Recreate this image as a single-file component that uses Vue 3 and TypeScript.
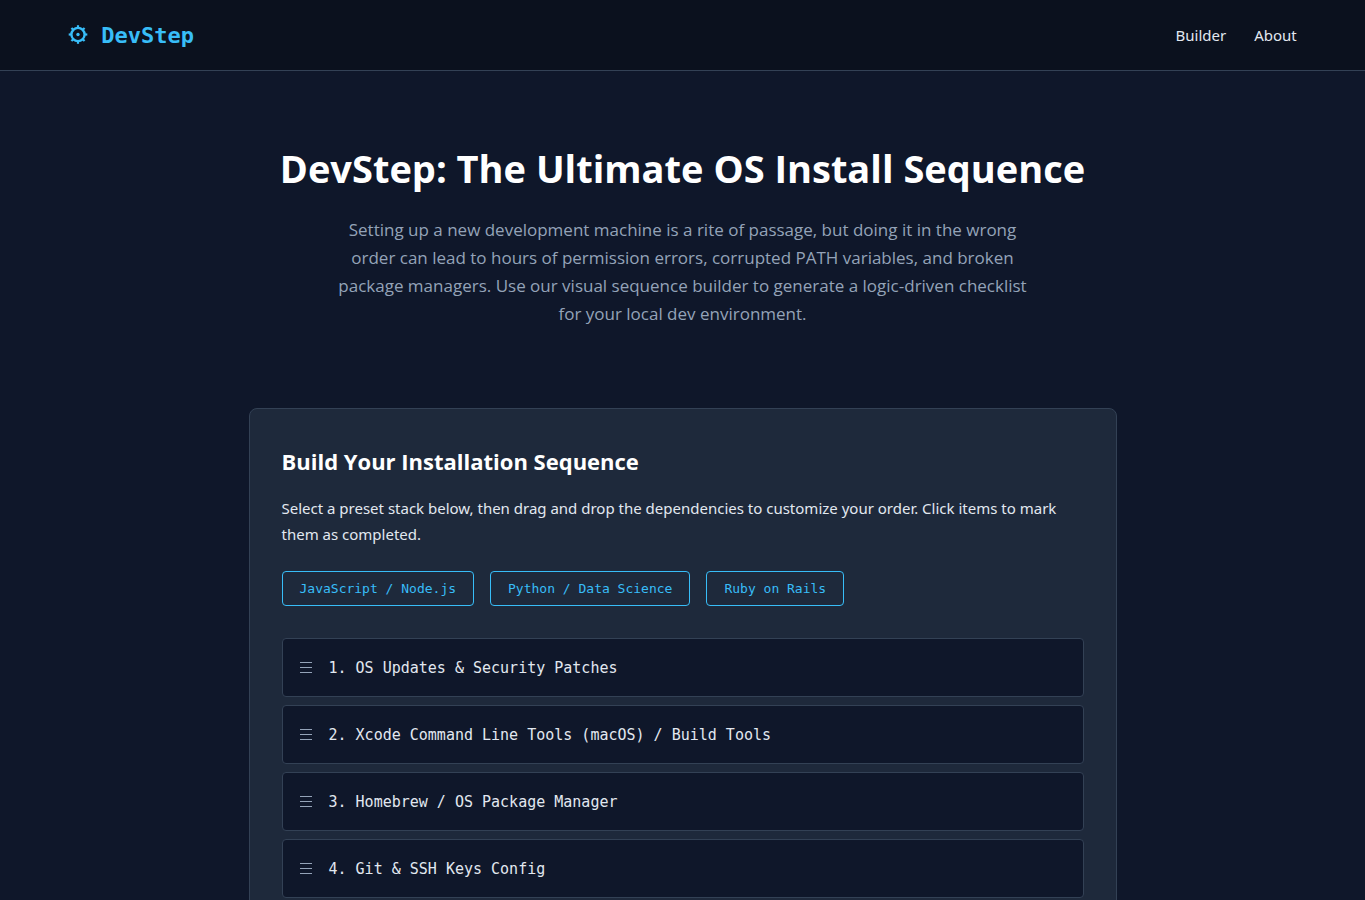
<script setup lang="ts">
import { ref } from 'vue'

interface Step {
  label: string
  done: boolean
}

const presets: Record<string, string[]> = {
  'JavaScript / Node.js': [
    'OS Updates & Security Patches',
    'Xcode Command Line Tools (macOS) / Build Tools',
    'Homebrew / OS Package Manager',
    'Git & SSH Keys Config',
  ],
  'Python / Data Science': [
    'OS Updates & Security Patches',
    'Homebrew / OS Package Manager',
    'Git & SSH Keys Config',
    'Python',
  ],
  'Ruby on Rails': [
    'OS Updates & Security Patches',
    'Homebrew / OS Package Manager',
    'Git & SSH Keys Config',
    'Ruby',
  ],
}

const steps = ref<Step[]>([])
const dragged = ref<number | null>(null)

function load(name: string): void {
  steps.value = presets[name].map((label) => ({ label, done: false }))
}

function drop(target: number): void {
  if (dragged.value === null) return
  const [moved] = steps.value.splice(dragged.value, 1)
  steps.value.splice(target, 0, moved)
  dragged.value = null
}

load('JavaScript / Node.js')
</script>

<template>
  <div class="page">
    <header class="topbar">
      <a class="brand" href="#">
        <svg class="gear" viewBox="0 0 20 20" aria-hidden="true">
          <circle cx="10" cy="9.5" r="6.6" fill="none" stroke="currentColor" stroke-width="2.4" />
          <circle cx="10" cy="9.5" r="1.7" fill="currentColor" />
          <g stroke="currentColor" stroke-width="2.2">
            <path
              v-for="n in 8"
              :key="n"
              d="M10 3.2V.2"
              :transform="`rotate(${n * 45} 10 9.5)`"
            />
          </g>
        </svg>
        <span>DevStep</span>
      </a>
      <nav class="links">
        <a href="#builder">Builder</a>
        <a href="#about">About</a>
      </nav>
    </header>

    <main class="main">
      <section class="hero">
        <h1>DevStep: The Ultimate OS Install Sequence</h1>
        <p>
          Setting up a new development machine is a rite of passage, but doing it in the wrong
          order can lead to hours of permission errors, corrupted PATH variables, and broken
          package managers. Use our visual sequence builder to generate a logic-driven checklist
          for your local dev environment.
        </p>
      </section>

      <section id="builder" class="card">
        <h2>Build Your Installation Sequence</h2>
        <p>
          Select a preset stack below, then drag and drop the dependencies to customize your order.
          Click items to mark them as completed.
        </p>
        <div class="presets">
          <button v-for="(_, name) in presets" :key="name" type="button" @click="load(name)">
            {{ name }}
          </button>
        </div>
        <ol class="steps">
          <li
            v-for="(step, i) in steps"
            :key="step.label"
            draggable="true"
            @dragstart="dragged = i"
            @dragover.prevent
            @drop="drop(i)"
          >
            <button type="button" :class="{ done: step.done }" @click="step.done = !step.done">
              <svg class="grip" viewBox="0 0 14 14" aria-hidden="true">
                <path d="M1 2.5H13M1 7.5H13M1 12.5H13" stroke="currentColor" />
              </svg>
              <span>{{ i + 1 }}. {{ step.label }}</span>
            </button>
          </li>
        </ol>
      </section>
    </main>
  </div>
</template>

<style>
body {
  background: #0f172a;
}
</style>

<style scoped>
.page {
  height: 100vh;
  overflow-y: auto;
  scrollbar-width: none;
  background: #0f172a;
  color: #e2e8f0;
  font: 15px/26px "Segoe UI", "Noto Sans", sans-serif;
}

.topbar {
  display: flex;
  justify-content: space-between;
  align-items: center;
  height: 70px;
  padding: 0 5%;
  background: #0b111e;
  border-bottom: 1px solid #334155;
}

.brand {
  display: flex;
  align-items: center;
  gap: 13px;
  color: #38bdf8;
  font: bold 22px/28px Consolas, "DejaVu Sans Mono", monospace;
  text-decoration: none;
}

.brand span {
  padding-top: 2px;
}

.gear {
  width: 20px;
  height: 20px;
}

.links {
  display: flex;
  gap: 28px;
}

.links a {
  color: #e2e8f0;
  text-decoration: none;
}

.main {
  box-sizing: border-box;
  max-width: 900px;
  margin: 0 auto;
  padding: 65px 16px;
}

.hero {
  margin-bottom: 64px;
  text-align: center;
}

h1,
h2,
.hero p {
  font-family: "Segoe UI", "Open Sans", sans-serif;
}

h1 {
  margin: 0 0 16px;
  color: #fff;
  font-size: 38px;
  line-height: 64px;
}

.hero p {
  max-width: 700px;
  margin: 0 auto;
  padding-bottom: 16px;
  color: #94a3b8;
  font-size: 17px;
  line-height: 28px;
}

.card {
  padding: 32px;
  background: #1e293b;
  border: 1px solid #334155;
  border-radius: 8px;
}

h2 {
  margin: 0 0 14px;
  color: #fff;
  font-size: 22px;
  line-height: 40px;
}

.card p {
  margin: 0 0 24px;
}

.presets {
  display: flex;
  flex-wrap: wrap;
  gap: 16px;
  margin-bottom: 32px;
}

.presets button {
  padding: 8px 17px;
  background: transparent;
  border: 1px solid #38bdf8;
  border-radius: 4px;
  color: #38bdf8;
  font: 13px/17px Consolas, "DejaVu Sans Mono", monospace;
  cursor: pointer;
}

.steps {
  display: grid;
  gap: 8px;
  margin: 0;
  padding: 0;
  list-style: none;
}

.steps button {
  display: flex;
  align-items: center;
  gap: 16px;
  width: 100%;
  padding: 17px 16px 15px;
  background: #0f172a;
  border: 1px solid #334155;
  border-radius: 4px;
  color: #e2e8f0;
  font: 15px/25px Consolas, "DejaVu Sans Mono", monospace;
  text-align: left;
  cursor: pointer;
}

.steps .done {
  opacity: 0.6;
  text-decoration: line-through;
}

.grip {
  width: 14px;
  height: 14px;
  margin-bottom: 3px;
  color: #94a3b8;
}
</style>
